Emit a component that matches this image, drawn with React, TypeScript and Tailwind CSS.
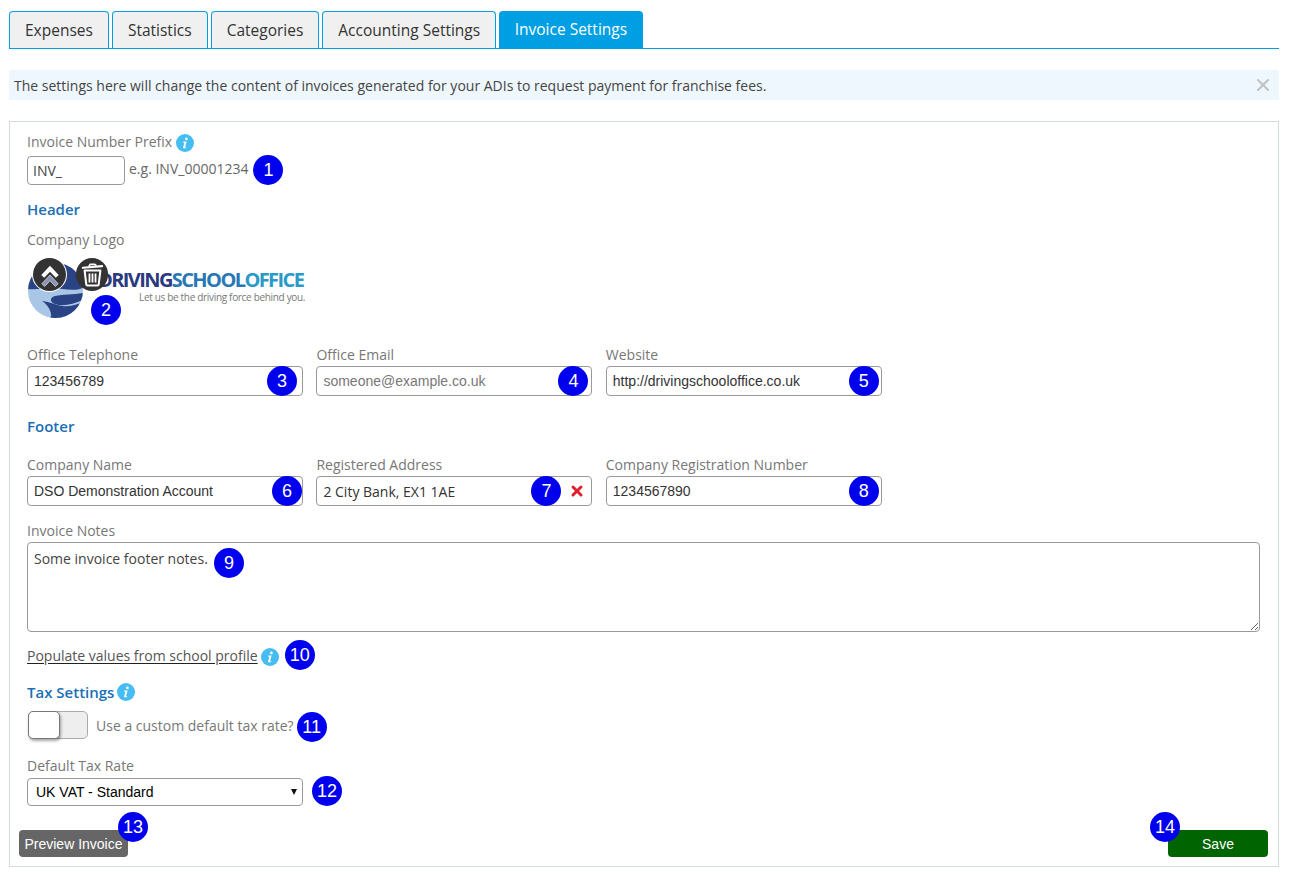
import { ReactNode } from "react";
import { X } from "lucide-react";

const tabs = ["Expenses", "Statistics", "Categories", "Accounting Settings"];

function Badge({ n, className }: { n: number; className: string }) {
  return (
    <span
      className={`absolute z-10 flex h-[30px] w-[30px] items-center justify-center rounded-full bg-[#0000ee] font-['Liberation_Sans',sans-serif] text-[18px] leading-none text-white ${className}`}
    >
      {n}
    </span>
  );
}

function Info({ className = "" }: { className?: string }) {
  return (
    <svg viewBox="0 0 18 18" className={`h-[18px] w-[18px] shrink-0 ${className}`}>
      <circle cx="9" cy="9" r="9" fill="#45bdf2" />
      <circle cx="10.4" cy="4.9" r="1.35" fill="#fff" />
      <path d="M7.4 7.6h3.2l-1.5 5.6h1.2l-.3 1.1H6.9l1.5-5.6H7.1z" fill="#fff" />
    </svg>
  );
}

function Field({
  label,
  value,
  placeholder,
  n,
  badgeClass,
  inputFont = "font-['Liberation_Sans',sans-serif]",
  extra,
}: {
  label: string;
  value?: string;
  placeholder?: string;
  n: number;
  badgeClass: string;
  inputFont?: string;
  extra?: ReactNode;
}) {
  return (
    <div className="w-[276px]">
      <div className="h-[22px] text-[14px] leading-[22px] text-[#777]">{label}</div>
      <div className="relative">
        <input
          readOnly
          value={value}
          placeholder={placeholder}
          className={`h-[30px] w-full rounded-[4px] border border-[#999] bg-white px-[6px] text-[14px] text-[#333] placeholder-[#777] outline-none ${inputFont}`}
        />
        <Badge n={n} className={`top-0 ${badgeClass}`} />
        {extra}
      </div>
    </div>
  );
}

function Logo() {
  return (
    <div className="relative mt-[8px] h-[60px] w-[278px]">
      <svg viewBox="0 0 55 55" className="absolute left-[1px] top-[5px] h-[55px] w-[55px]">
        <defs>
          <clipPath id="logoClip">
            <circle cx="27.5" cy="27.5" r="27.5" />
          </clipPath>
        </defs>
        <g clipPath="url(#logoClip)">
          <rect width="55" height="55" fill="#a9c6e6" />
          <path d="M16 0h39v25c-10 4-22 0-30 0-9 0-17 2-25 1V8z" fill="#2a4384" />
          <path d="M55 30c-10 2-20 1-28 3-6 2-5 6 0 8 8 3 18 0 28-4z" fill="#2a4384" />
          <path d="M0 34c10 6 20 9 27 12 9 3 18 0 28-4v13H16C9 50 3 42 0 34z" fill="#a9c6e6" />
          <path d="M14 38c8 1 14 4 20 5 7 1 14-1 21-4v16H22c3-2 0-12-8-17z" fill="#2a4384" />
        </g>
      </svg>
      <div className="absolute left-[71px] top-[12px] whitespace-nowrap text-[20px] font-bold leading-[20px] tracking-[-1.6px]">
        <span className="text-[#2b3a7e]">DRIVING</span>
        <span className="text-[#2878b4]">SCHOOL</span>
        <span className="text-[#2a9ac8]">OFFICE</span>
      </div>
      <div className="absolute left-[112px] top-[32px] whitespace-nowrap text-[10px] leading-[14px] tracking-[-0.32px] text-[#777]">
        Let us be the driving force behind you.
      </div>
      <span className="absolute left-[6px] top-0 flex h-[33px] w-[33px] items-center justify-center rounded-full bg-[#333] ring-1 ring-white">
        <svg viewBox="0 0 24 24" className="h-[28px] w-[28px]">
          <path d="M5 19.5 12 12l7 7.5-2.4 2.3L12 17l-4.6 4.8z" fill="#8b93b8" stroke="#fff" strokeWidth=".5" />
          <path d="M4.5 12 12 4l7.5 8-2.6 2.4L12 9.2l-4.9 5.2z" fill="#fff" />
        </svg>
      </span>
      <span className="absolute left-[49px] top-0 flex h-[33px] w-[32px] items-center justify-center rounded-full bg-[#333]">
        <svg viewBox="0 0 24 24" className="h-[27px] w-[27px]" fill="none" stroke="#fff">
          <path d="M3.5 6 20.5 4.5" strokeWidth="2" strokeLinecap="round" />
          <path d="M8.5 5 10 3h4l1.5 1.2" strokeWidth="1.4" />
          <path d="M5 8.5h14l-1.5 12.5q-.1.8-1 .8H7.5q-.9 0-1-.8z" strokeWidth="1.8" strokeLinejoin="round" />
          <path d="M9.3 11v8M12 11v8M14.7 11v8" strokeWidth="1.6" />
        </svg>
      </span>
      <Badge n={2} className="left-[64px] top-[37px]" />
    </div>
  );
}

export default function App() {
  return (
    <div className="min-h-[879px] bg-white pl-[9px] pr-[11px] pt-[11px] font-['Open_Sans',sans-serif] text-[14px] text-[#444]">
      {/* Tabs */}
      <div className="flex gap-[3px] border-b border-[#009fe3]">
        {tabs.map((tab) => (
          <div
            key={tab}
            className="h-[37px] rounded-t-[4px] border border-b-0 border-[#009fe3] bg-[#f0f0f0] px-[15px] text-[15.5px] leading-[36px] text-[#333]"
          >
            {tab}
          </div>
        ))}
        <div className="h-[37px] rounded-t-[4px] bg-[#009fe3] px-[15.5px] text-[15.5px] leading-[37px] text-white">
          Invoice Settings
        </div>
      </div>

      {/* Notice */}
      <div className="mt-[21px] flex h-[30px] items-center justify-between bg-[#eff7fe] pl-[5px] pr-[6px] text-[14px] text-[#444]">
        <span>The settings here will change the content of invoices generated for your ADIs to request payment for franchise fees.</span>
        <X className="h-[20px] w-[20px] text-[#c2c2c2]" strokeWidth={2.5} />
      </div>

      {/* Form card */}
      <div className="relative mt-[21px] h-[746px] border border-[#d5dce0] px-[17px] pt-[8px]">
        <div className="flex h-[23px] items-center gap-[4px] text-[#777]">
          Invoice Number Prefix
          <Info className="mt-[2px]" />
        </div>
        <div className="mt-[2px] flex items-center">
          <input
            readOnly
            value="INV_"
            className="mt-[1px] h-[29px] w-[98px] rounded-[4px] border border-[#999] bg-white px-[5px] text-[14px] text-[#444] outline-none"
          />
          <span className="mb-[3px] ml-[4px] text-[#666]">e.g. INV_00001234</span>
          <span className="relative ml-[5px] h-[30px] w-[30px]">
            <Badge n={1} className="left-0 top-0" />
          </span>
        </div>

        <div className="mt-[12px] h-[24px] text-[15px] font-semibold leading-[24px] text-[#1a6fb5]">Header</div>
        <div className="mt-[9px] h-[20px] leading-[20px] text-[#777]">Company Logo</div>
        <Logo />

        <div className="mt-[26px] flex gap-[13.4px]">
          <Field label="Office Telephone" value="123456789" n={3} badgeClass="right-[6px]" />
          <Field label="Office Email" placeholder="someone@example.co.uk" n={4} badgeClass="right-[4px]" />
          <Field label="Website" value="http://drivingschooloffice.co.uk" n={5} badgeClass="right-[3px]" />
        </div>

        <div className="mt-[18px] h-[24px] text-[15px] font-semibold leading-[24px] text-[#1a6fb5]">Footer</div>

        <div className="mt-[16px] flex gap-[13.4px]">
          <Field label="Company Name" value="DSO Demonstration Account" n={6} badgeClass="right-[1px]" />
          <Field
            label="Registered Address"
            value="2 City Bank, EX1 1AE"
            n={7}
            badgeClass="right-[31px]"
            inputFont="font-['Open_Sans',sans-serif]"
            extra={
              <X className="absolute right-[7px] top-[7px] h-[16px] w-[16px] text-[#e0202e]" strokeWidth={4.5} />
            }
          />
          <Field label="Company Registration Number" value="1234567890" n={8} badgeClass="right-[3px]" />
        </div>

        <div className="mt-[14px] h-[22px] leading-[22px] text-[#777]">Invoice Notes</div>
        <div className="relative">
          <textarea
            readOnly
            value="Some invoice footer notes."
            className="block h-[90px] w-[1233px] rounded-[4px] border border-[#999] bg-white px-[6px] py-[5px] text-[14px] text-[#444] outline-none"
          />
          <Badge n={9} className="left-[187px] top-[6px]" />
        </div>

        <div className="mt-[9px] flex h-[28px] items-center">
          <span className="text-[#555] underline decoration-[#222] underline-offset-2">Populate values from school profile</span>
          <Info className="ml-[3px] mt-[3px]" />
          <span className="relative ml-[6px] h-[30px] w-[30px]">
            <Badge n={10} className="left-0 top-0" />
          </span>
        </div>

        <div className="mt-[11px] flex h-[24px] items-center gap-[3px] text-[15px] font-semibold text-[#1a6fb5]">
          Tax Settings
          <Info />
        </div>

        <div className="mt-[7px] flex h-[28px] items-center pl-[1px]">
          <div className="relative h-[28px] w-[60px] rounded-[5px] border border-[#aaa] bg-[#eeeeee]">
            <div className="absolute -left-px -top-px h-[28px] w-[32px] rounded-[5px] border border-[#777] bg-white shadow-[1px_2px_3px_rgba(0,0,0,0.35)]" />
          </div>
          <span className="ml-[8px] text-[#777]">Use a custom default tax rate?</span>
          <span className="relative ml-[3px] h-[30px] w-[30px]">
            <Badge n={11} className="left-0 top-[2px]" />
          </span>
        </div>

        <div className="mt-[16px] h-[22px] leading-[22px] text-[#777]">Default Tax Rate</div>
        <div className="flex items-center">
          <div className="relative">
            <select className="block h-[28px] w-[276px] appearance-none rounded-[4px] border border-[#999] bg-white pl-[8px] font-['Liberation_Sans',sans-serif] text-[14px] text-black outline-none">
              <option>UK VAT - Standard</option>
            </select>
            <span className="pointer-events-none absolute right-[6px] top-[11px] h-0 w-0 border-x-[3.5px] border-t-[6px] border-x-transparent border-t-[#111]" />
          </div>
          <span className="relative ml-[9px] h-[30px] w-[30px]">
            <Badge n={12} className="left-0 -top-[1px]" />
          </span>
        </div>

        <div className="absolute bottom-[9px] left-[9px] right-[10px] flex justify-between font-['Liberation_Sans',sans-serif] text-[14px]">
          <div className="relative flex h-[27px] w-[109px] items-center justify-center rounded-[4px] bg-[#666] pt-[1px] text-white">
            Preview Invoice
            <Badge n={13} className="left-[99px] -top-[18px]" />
          </div>
          <div className="relative flex h-[27px] w-[100px] items-center justify-center rounded-[4px] bg-[#006400] pt-[1px] text-white">
            Save
            <Badge n={14} className="-left-[18px] -top-[18px]" />
          </div>
        </div>
      </div>
    </div>
  );
}
